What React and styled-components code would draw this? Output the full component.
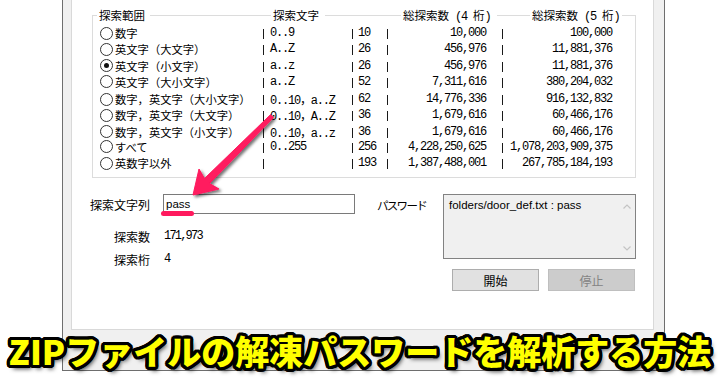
import React from 'react';
import styled, { createGlobalStyle } from 'styled-components';

const GlobalStyle = createGlobalStyle`
  html, body { margin: 0; padding: 0; background: #fff; }
  body { width: 720px; height: 379px; overflow: hidden; font-family: "Noto Sans CJK JP", sans-serif; color: #000; }
`;

const MONO = `"Liberation Mono", "Noto Sans CJK JP", monospace`;
const UI = `"Noto Sans CJK JP", sans-serif`;
const LATIN = `"Liberation Sans", "Noto Sans CJK JP", sans-serif`;
const LINE = '#dcdcdc';

const Page = styled.div`
  position: relative;
  width: 720px;
  height: 379px;
  overflow: hidden;
  background: #fff;
`;

const Frame = styled.div`
  margin-left: 62px;
  width: 603px;
  height: 371px;
  box-sizing: border-box;
  border: 1px solid #6e6e6e;
  border-top: none;
  background: #f0f0f0;
  padding: 0 10px 40px 8px;
  display: flex;
`;

const Panel = styled.div`
  flex: 1;
  background: #fff;
  border: 1px solid #d9d9d9;
  border-top: none;
  padding-top: 8px;
`;

const GroupBox = styled.div`
  margin-left: 20px;
  width: 544px;
`;

const GroupHead = styled.div`
  display: flex;
  height: 14px;
  font-family: ${UI};
  font-size: 11.5px;
  line-height: 14px;
`;

const Corner = styled.div`
  width: ${p => p.$w}px;
  height: 7px;
  align-self: flex-end;
  box-sizing: border-box;
  border-top: 1px solid ${LINE};
  ${p => (p.$right ? 'border-right' : 'border-left')}: 1px solid ${LINE};
`;

const HeadLine = styled.div`
  width: ${p => p.$w}px;
  height: 1px;
  margin-top: 7px;
  background: ${LINE};
`;

const HeadLabel = styled.div`
  width: ${p => p.$w}px;
  box-sizing: border-box;
  padding-left: 2px;
  white-space: nowrap;
`;

const Half = styled.span`
  font-family: ${MONO};
  font-size: 12px;
  letter-spacing: -1.2px;
`;

const GroupBody = styled.div`
  border: 1px solid ${LINE};
  border-top: none;
  padding: 3px 0 6px 7px;
`;

const Row = styled.div`
  display: grid;
  grid-template-columns: 163px 1px 88px 1px 34px 1px 114px 1px 109px;
  height: 16.25px;
  align-items: center;
`;

const RadioCell = styled.div`
  display: flex;
  align-items: center;
  gap: 2px;
  font-family: ${UI};
  font-size: 11.3px;
  white-space: nowrap;
`;

const RadioCircle = styled.span`
  width: 13px;
  height: 13px;
  box-sizing: border-box;
  border: 1px solid #333;
  border-radius: 50%;
  background: #fff;
  display: flex;
  align-items: center;
  justify-content: center;
  flex: none;
  &::after {
    content: '';
    width: 5px;
    height: 5px;
    border-radius: 50%;
    background: #111;
    display: ${p => (p.$checked ? 'block' : 'none')};
  }
`;

const Sep = styled.span`
  width: 1px;
  height: 10px;
  margin-top: 2px;
  background: #1a1a1a;
`;

const MonoCell = styled.span`
  font-family: ${MONO};
  font-size: 12px;
  letter-spacing: -1.2px;
  white-space: nowrap;
  text-align: ${p => (p.$right ? 'right' : 'left')};
  padding-left: ${p => p.$pl || 0}px;
  padding-right: ${p => p.$pr || 0}px;
`;

const FormArea = styled.div`
  display: flex;
  margin: 16px 0 0 6px;
`;

const LeftBlock = styled.div`
  display: flex;
  flex-direction: column;
`;

const FieldRow = styled.div`
  display: grid;
  grid-template-columns: 72px 192px;
  column-gap: 13px;
  align-items: center;
  height: ${p => p.$h}px;
  margin-top: ${p => p.$mt || 0}px;
`;

const FieldLabel = styled.div`
  text-align: right;
  font-family: ${UI};
  font-size: 12px;
  white-space: nowrap;
`;

const InputBox = styled.div`
  position: relative;
  height: 20px;
  box-sizing: border-box;
  border: 1px solid #7a7a7a;
  background: #fff;
  padding-left: 2px;
  font-family: ${LATIN};
  font-size: 11.5px;
  line-height: 18px;
`;

const Underline = styled.span`
  position: absolute;
  left: -3px;
  top: 16px;
  width: 33px;
  height: 5px;
  border-radius: 3px;
  background: #ff1a5e;
`;

const StatValue = styled.div`
  font-family: ${MONO};
  font-size: 12px;
  letter-spacing: -1.8px;
  padding-left: 1px;
`;

const RightBlock = styled.div`
  margin-left: 22px;
  display: grid;
  grid-template-columns: 66px 193px;
  align-items: start;
`;

const PassLabel = styled.div`
  font-family: ${UI};
  font-size: 11.5px;
  letter-spacing: -1.7px;
  padding-top: 3px;
  white-space: nowrap;
`;

const OutputBox = styled.div`
  height: 65px;
  box-sizing: border-box;
  border: 1px solid #828282;
  background: #f0f0f0;
  display: flex;
`;

const OutputText = styled.div`
  flex: 1;
  padding: 3px 0 0 5px;
  font-family: ${LATIN};
  font-size: 11.5px;
  line-height: 14px;
  white-space: nowrap;
`;

const ScrollCol = styled.div`
  width: 17px;
  display: flex;
  flex-direction: column;
  justify-content: space-between;
  align-items: center;
  padding: 9px 0 7px;
`;

const ButtonRow = styled.div`
  grid-column: 2;
  display: flex;
  gap: 9px;
  margin-top: 10px;
  padding-left: 9px;
`;

const Button = styled.div`
  width: 87px;
  height: 22px;
  box-sizing: border-box;
  border: 1px solid ${p => (p.$disabled ? '#bfbfbf' : '#adadad')};
  background: ${p => (p.$disabled ? '#cccccc' : '#e1e1e1')};
  color: ${p => (p.$disabled ? '#838383' : '#000')};
  display: flex;
  align-items: center;
  justify-content: center;
  font-family: ${UI};
  font-size: 12px;
`;

const ArrowLayer = styled.svg`
  position: absolute;
  left: 0;
  top: 0;
  pointer-events: none;
`;

const outline = Array.from({ length: 24 }, (_, i) => {
  const a = (i / 24) * 2 * Math.PI;
  return `${(3.3 * Math.cos(a)).toFixed(2)}px ${(3.3 * Math.sin(a)).toFixed(2)}px 0 #000`;
}).join(', ');

const Title = styled.div`
  position: absolute;
  left: 0;
  right: 0;
  top: 329px;
  height: 44px;
  text-align: center;
  font-family: "Noto Sans CJK JP", sans-serif;
  font-weight: 900;
  font-size: 34px;
  line-height: 44px;
  letter-spacing: 0;
  color: #ffff00;
  white-space: nowrap;
  text-shadow: ${outline}, 3px 4px 4px rgba(0,0,0,0.7);
`;

const rows = [
  { label: '数字', pat: '0..9', n: '10', d4: '10,000', d5: '100,000' },
  { label: '英文字（大文字）', pat: 'A..Z', n: '26', d4: '456,976', d5: '11,881,376' },
  { label: '英文字（小文字）', pat: 'a..z', n: '26', d4: '456,976', d5: '11,881,376', checked: true },
  { label: '英文字（大小文字）', pat: 'a..Z', n: '52', d4: '7,311,616', d5: '380,204,032' },
  { label: '数字，英文字（大小文字）', pat: '0..10，a..Z', n: '62', d4: '14,776,336', d5: '916,132,832' },
  { label: '数字，英文字（大文字）', pat: '0..10，A..Z', n: '36', d4: '1,679,616', d5: '60,466,176' },
  { label: '数字，英文字（小文字）', pat: '0..10，a..z', n: '36', d4: '1,679,616', d5: '60,466,176' },
  { label: 'すべて', pat: '0..255', n: '256', d4: '4,228,250,625', d5: '1,078,203,909,375' },
  { label: '英数字以外', pat: '', n: '193', d4: '1,387,488,001', d5: '267,785,184,193' },
];

const Chevron = ({ up }) => (
  <svg width="8" height="5" viewBox="0 0 8 5">
    <path d={up ? 'M0.5 4.5 L4 1 L7.5 4.5' : 'M0.5 0.5 L4 4 L7.5 0.5'} fill="none" stroke="#c4c4c4" strokeWidth="1.2" />
  </svg>
);

export default function App() {
  return (
    <Page>
      <GlobalStyle />
      <Frame>
        <Panel>
          <GroupBox>
            <GroupHead>
              <Corner $w={5} />
              <HeadLabel $w={53}>探索範囲</HeadLabel>
              <HeadLine $w={121} />
              <HeadLabel $w={54}>探索文字</HeadLabel>
              <HeadLine $w={76} />
              <HeadLabel $w={96}>総探索数<Half> (4 </Half>桁<Half>)</Half></HeadLabel>
              <HeadLine $w={33} />
              <HeadLabel $w={92}>総探索数<Half> (5 </Half>桁<Half>)</Half></HeadLabel>
              <Corner $w={14} $right />
            </GroupHead>
            <GroupBody>
              {rows.map((r, i) => (
                <Row key={i}>
                  <RadioCell>
                    <RadioCircle $checked={r.checked} />
                    {r.label}
                  </RadioCell>
                  <Sep />
                  <MonoCell $pl={6}>{r.pat}</MonoCell>
                  <Sep />
                  <MonoCell $pl={5}>{r.n}</MonoCell>
                  <Sep />
                  <MonoCell $right $pr={16}>{r.d4}</MonoCell>
                  <Sep />
                  <MonoCell $right>{r.d5}</MonoCell>
                </Row>
              ))}
            </GroupBody>
          </GroupBox>

          <FormArea>
            <LeftBlock>
              <FieldRow $h={20}>
                <FieldLabel>探索文字列</FieldLabel>
                <InputBox>
                  pass
                  <Underline />
                </InputBox>
              </FieldRow>
              <FieldRow $h={18} $mt={13}>
                <FieldLabel>探索数</FieldLabel>
                <StatValue>171,973</StatValue>
              </FieldRow>
              <FieldRow $h={18} $mt={5}>
                <FieldLabel>探索桁</FieldLabel>
                <StatValue>4</StatValue>
              </FieldRow>
            </LeftBlock>
            <RightBlock>
              <PassLabel>パスワード</PassLabel>
              <OutputBox>
                <OutputText>folders/door_def.txt : pass</OutputText>
                <ScrollCol>
                  <Chevron up />
                  <Chevron />
                </ScrollCol>
              </OutputBox>
              <ButtonRow>
                <Button>開始</Button>
                <Button $disabled>停止</Button>
              </ButtonRow>
            </RightBlock>
          </FormArea>
        </Panel>
      </Frame>

      <ArrowLayer width="720" height="379" viewBox="0 0 720 379">
        <defs>
          <filter id="arrowShadow" x="-20%" y="-20%" width="140%" height="140%">
            <feDropShadow dx="2" dy="2" stdDeviation="1.6" floodColor="#000" floodOpacity="0.55" />
          </filter>
        </defs>
        <polygon
          points="193,195 219,189 209.5,183.5 273.4,117.6 270.6,114.6 204.5,178.5 199,169"
          fill="#ff1a5e"
          stroke="#ff1a5e"
          strokeWidth="1"
          strokeLinejoin="round"
          filter="url(#arrowShadow)"
        />
      </ArrowLayer>

      <Title>ZIPファイルの解凍パスワードを解析する方法</Title>
    </Page>
  );
}
